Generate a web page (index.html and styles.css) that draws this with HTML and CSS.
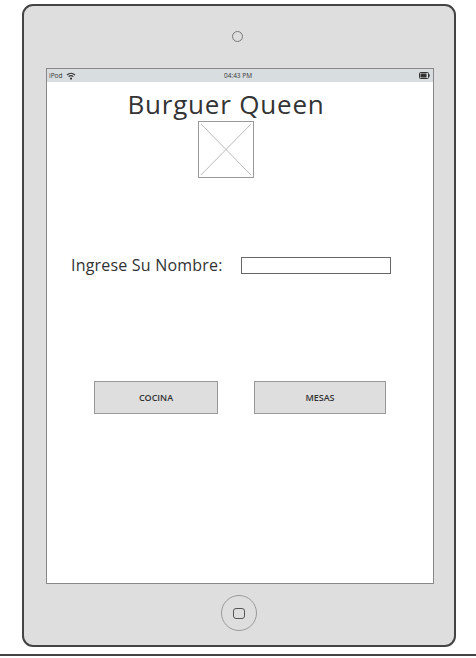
FILE: index.html
```html
<!DOCTYPE html>
<html lang="es">
<head>
<meta charset="utf-8">
<title>Burguer Queen</title>
<link rel="stylesheet" href="styles.css">
</head>
<body>
<div class="device">
  <div class="camera"></div>
  <div class="screen">
    <div class="statusbar">
      <div class="sb-left">
        <span>iPod</span>
        <svg class="wifi" width="10" height="8" viewBox="0 0 10 8">
          <path d="M1 3 Q5 -0.5 9 3" fill="none" stroke="#333" stroke-width="1.2"/>
          <path d="M2.6 4.6 Q5 2.5 7.4 4.6" fill="none" stroke="#333" stroke-width="1.2"/>
          <circle cx="5" cy="6.6" r="1.1" fill="#333"/>
        </svg>
      </div>
      <span class="sb-time">04:43 PM</span>
      <svg class="battery" width="11" height="7" viewBox="0 0 11 7">
        <rect x="0.5" y="0.5" width="9" height="6" rx="1" fill="none" stroke="#333"/>
        <rect x="1.5" y="1.5" width="6" height="4" fill="#333"/>
        <rect x="9.5" y="2.3" width="1.2" height="2.4" fill="#333"/>
      </svg>
    </div>
    <div class="content">
      <div class="head">
        <h1 class="title">Burguer Queen</h1>
        <svg class="placeholder" width="56" height="57" viewBox="0 0 56 57">
          <rect x="0.5" y="0.5" width="55" height="56" fill="#fff" stroke="#999"/>
          <line x1="3" y1="3" x2="53" y2="54" stroke="#bbb" stroke-width="1"/>
          <line x1="53" y1="3" x2="3" y2="54" stroke="#bbb" stroke-width="1"/>
        </svg>
      </div>
      <div class="name-row">
        <label class="name-label" for="nombre">Ingrese Su Nombre:</label>
        <input class="name-input" id="nombre" type="text">
      </div>
      <div class="buttons">
        <button class="btn btn-cocina">COCINA</button>
        <button class="btn btn-mesas">MESAS</button>
      </div>
    </div>
  </div>
  <div class="home"><div class="home-square"></div></div>
</div>
<div class="baseline"></div>
</body>
</html>
```

FILE: styles.css
```css
* { box-sizing: border-box; }
html, body { margin: 0; padding: 0; background: #fff; }
body {
  width: 476px;
  height: 658px;
  overflow: hidden;
  font-family: "Open Sans", "Liberation Sans", sans-serif;
  color: #333;
  padding-top: 4px;
}
.device {
  margin-left: 22px;
  width: 434px;
  height: 643px;
  border: 2px solid #444;
  border-radius: 11px;
  background: #dedede;
  display: flex;
  flex-direction: column;
  align-items: flex-start;
}
.camera {
  margin-top: 25px;
  margin-left: 208px;
  width: 11px;
  height: 11px;
  border: 1px solid #777;
  border-radius: 50%;
}
.screen {
  margin-top: 26px;
  margin-left: 22px;
  width: 388px;
  height: 516px;
  border: 1px solid #888;
  background: #fff;
  display: flex;
  flex-direction: column;
}
.statusbar {
  height: 13px;
  background: #d8dde0;
  display: flex;
  align-items: center;
  justify-content: space-between;
  padding: 0 3px 0 2px;
  font-size: 6.5px;
  color: #333;
  position: relative;
}
.sb-left { display: flex; align-items: center; gap: 4px; }
.sb-time {
  position: absolute;
  left: 177px;
  top: 2px;
  font-size: 6.5px;
}
.content { flex: 1; display: flex; flex-direction: column; }
.head {
  display: flex;
  flex-direction: column;
  align-items: center;
  padding-right: 28px;
  padding-top: 7px;
}
.title {
  margin: 0;
  font-weight: 500;
  font-size: 26px;
  line-height: 30px;
  color: #333;
  letter-spacing: 0.8px;
}
.placeholder { display: block; margin-top: 2px; }
.name-row {
  margin-top: 76px;
  margin-left: 24px;
  display: flex;
  align-items: center;
  gap: 18px;
}
.name-label { font-size: 16px; color: #333; letter-spacing: 0.2px; }
.name-input {
  width: 150px;
  height: 17px;
  border: 1px solid #666;
  padding: 0;
  background: #fff;
}
.buttons {
  margin-top: 105px;
  margin-left: 47px;
  display: flex;
  gap: 36px;
}
.btn {
  height: 33px;
  border: 1px solid #999;
  background: #dedede;
  font-family: "Open Sans", "Liberation Sans", sans-serif;
  font-size: 9px;
  font-weight: 600;
  color: #333;
  padding: 0;
}
.btn-cocina { width: 124px; }
.btn-mesas { width: 132px; }
.home {
  margin-top: 11px;
  margin-left: 197px;
  width: 36px;
  height: 36px;
  border: 1px solid #999;
  border-radius: 50%;
  display: flex;
  align-items: center;
  justify-content: center;
}
.home-square {
  width: 12px;
  height: 11px;
  border: 1px solid #555;
  border-radius: 3px;
}
.baseline {
  margin-top: 7px;
  height: 2px;
  background: #444;
}
```
